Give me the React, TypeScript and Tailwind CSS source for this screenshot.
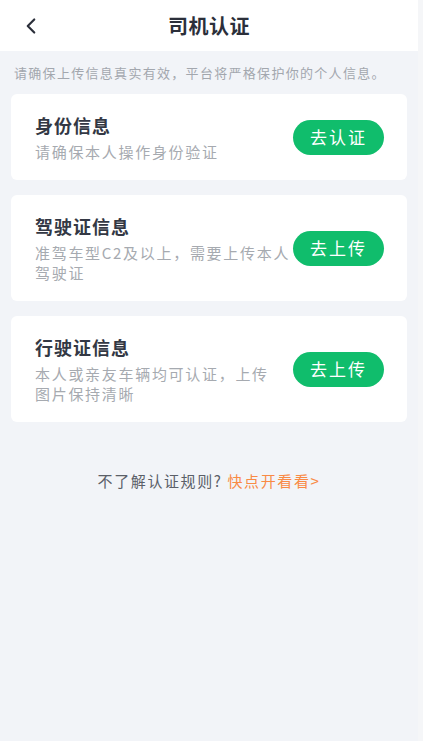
import { ChevronLeft } from 'lucide-react';

const cards = [
  { title: '身份信息', desc: ['请确保本人操作身份验证'], action: '去认证' },
  { title: '驾驶证信息', desc: ['准驾车型C2及以上，需要上传本人', '驾驶证'], action: '去上传' },
  { title: '行驶证信息', desc: ['本人或亲友车辆均可认证，上传', '图片保持清晰'], action: '去上传' },
];

export default function App() {
  return (
    <div
      className="flex min-h-[741px] w-[423px] bg-[#f2f4f8]"
      style={{ fontFamily: '"Noto Sans CJK SC", "Noto Sans", sans-serif' }}
    >
      <div className="flex w-[418px] flex-col">
        {/* Header */}
        <div className="relative flex h-[51px] items-center justify-center bg-white">
          <button className="absolute left-[18px] top-[13px] text-[#2b2f3a]">
            <ChevronLeft size={26} strokeWidth={2} />
          </button>
          <h1 className="text-[20px] font-bold tracking-[0.5px] text-[#2b2f3a]">司机认证</h1>
        </div>

        <p className="mt-[12px] pl-[14px] text-[13px] leading-[20px] tracking-[1.3px] text-[#a3a7ae]">
          请确保上传信息真实有效，平台将严格保护你的个人信息。
        </p>

        <div className="mt-[11px] flex flex-col gap-[15px] px-[11px]">
          {cards.map((c) => (
            <div
              key={c.title}
              className={`flex items-center justify-between rounded-[6px] bg-white pl-[24px] pr-[23px] ${
                c.desc.length > 1 ? 'h-[106px]' : 'h-[86px]'
              }`}
            >
              <div className="flex flex-col">
                <div className="text-[18px] font-bold leading-[26px] tracking-[1px] text-[#333844]">{c.title}</div>
                <div className="mt-[4px] text-[15px] leading-[20px] tracking-[1.7px] text-[#a6aab0]">
                  {c.desc.map((d) => (
                    <div key={d}>{d}</div>
                  ))}
                </div>
              </div>
              <button className="flex h-[35px] w-[91px] shrink-0 items-center justify-center rounded-full bg-[#10bd6c] text-[17px] tracking-[2px] text-white">
                {c.action}
              </button>
            </div>
          ))}
        </div>

        <p className="mt-[48px] text-center text-[15px] leading-[22px] tracking-[1.6px] text-[#5b5f68]">
          不了解认证规则?<span className="text-[#f98a45]"> 快点开看看&gt;</span>
        </p>
      </div>
      <div className="w-[5px] bg-[#f5f6f8]" />
    </div>
  );
}
